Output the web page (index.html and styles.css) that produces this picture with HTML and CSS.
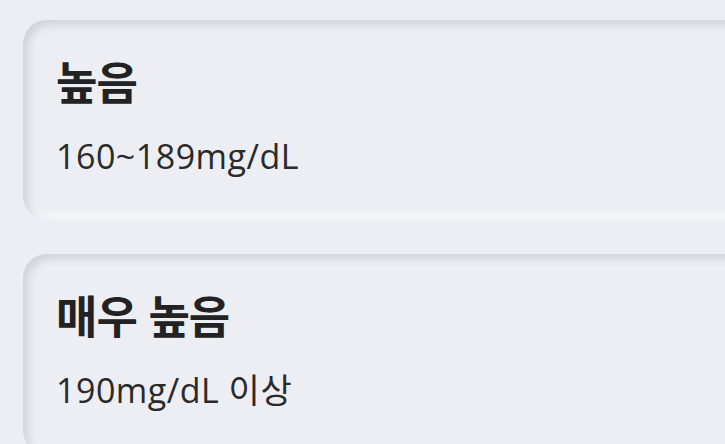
FILE: index.html
```html
<!DOCTYPE html>
<html lang="ko">
<head>
<meta charset="utf-8">
<link rel="stylesheet" href="styles.css">
</head>
<body>
<main class="list">
  <section class="card">
    <h2 class="card-title">높음</h2>
    <p class="card-range">160~189mg/dL</p>
  </section>
  <section class="card">
    <h2 class="card-title">매우 높음</h2>
    <p class="card-range">190mg/dL 이상</p>
  </section>
</main>
</body>
</html>
```
FILE: styles.css
```css
html, body {
  margin: 0;
  padding: 0;
  overflow: hidden;
  background: #edeef3;
}
.list {
  display: flex;
  flex-direction: column;
  gap: 34px;
  padding: 20px 0 0 23px;
  width: 900px;
}
.card {
  box-sizing: border-box;
  height: 200px;
  padding: 33px 33px 0;
  border-radius: 24px;
  background: #edeef3;
  box-shadow: inset 5px 5px 9px #d2d3d9, inset -5px -5px 8px #f8f8fc;
}
.card-title {
  margin: 0;
  font-family: "Noto Sans CJK KR", sans-serif;
  font-weight: 700;
  font-size: 45px;
  letter-spacing: -1px;
  line-height: 56px;
  color: #222222;
}
.card-range {
  margin: 23px 0 0;
  font-family: "Open Sans", "Noto Sans CJK KR", sans-serif;
  font-weight: 400;
  font-size: 34px;
  letter-spacing: 0.5px;
  line-height: 48px;
  color: #2a2a2a;
}
```
